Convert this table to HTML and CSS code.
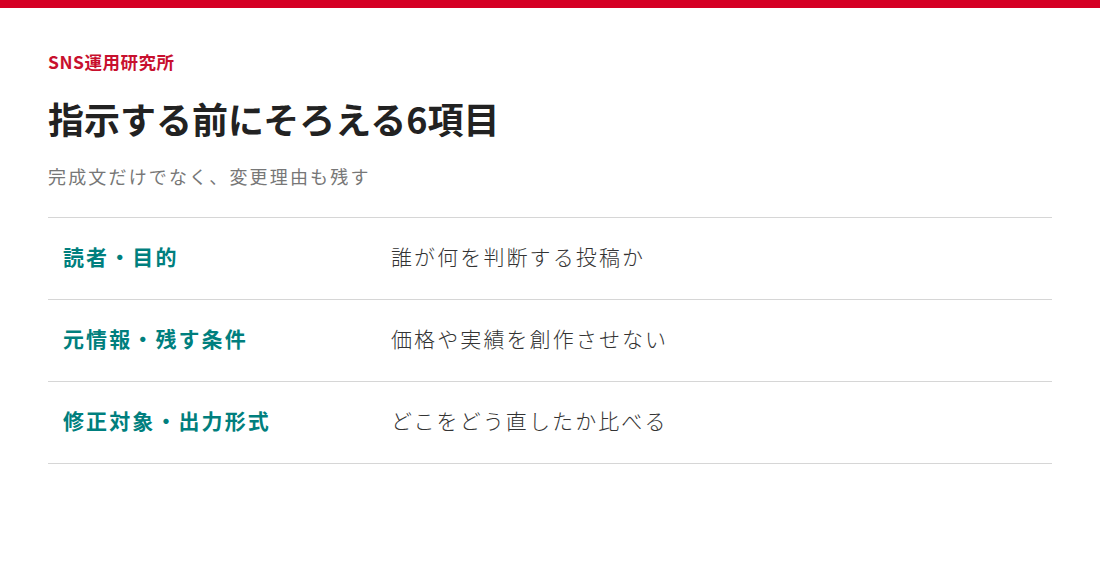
FILE: index.html
```html
<!DOCTYPE html>
<html lang="ja">
<head>
<meta charset="utf-8">
<link rel="stylesheet" href="styles.css">
</head>
<body>
<div class="topbar"></div>
<main class="page">
  <div class="brand">SNS運用研究所</div>
  <h1 class="title">指示する前にそろえる6項目</h1>
  <p class="subtitle">完成文だけでなく、変更理由も残す</p>
  <div class="table">
    <div class="row">
      <div class="label">読者・目的</div>
      <div class="value">誰が何を判断する投稿か</div>
    </div>
    <div class="row">
      <div class="label">元情報・残す条件</div>
      <div class="value">価格や実績を創作させない</div>
    </div>
    <div class="row">
      <div class="label">修正対象・出力形式</div>
      <div class="value">どこをどう直したか比べる</div>
    </div>
  </div>
</main>
</body>
</html>
```
FILE: styles.css
```css
html, body {
  margin: 0;
  padding: 0;
  background: #ffffff;
}
body {
  font-family: "Noto Sans CJK JP", "Noto Sans", sans-serif;
  color: #222222;
}
.topbar {
  height: 8px;
  background: #d50025;
}
.page {
  padding: 42px 48px 0;
}
.brand {
  font-size: 17.5px;
  line-height: 24px;
  font-weight: 700;
  color: #c8102e;
  letter-spacing: 0.03em;
}
.title {
  margin: 20px 0 0;
  font-size: 36px;
  line-height: 48px;
  font-weight: 700;
  color: #222222;
}
.subtitle {
  margin: 20px 0 0;
  font-size: 18px;
  line-height: 28px;
  color: #777777;
  letter-spacing: 0.12em;
}
.table {
  margin-top: 27px;
  border-top: 1px solid #d6d6d6;
}
.row {
  display: grid;
  grid-template-columns: 343px 1fr;
  align-items: center;
  height: 81px;
  box-sizing: border-box;
  padding-bottom: 6px;
  border-bottom: 1px solid #d6d6d6;
}
.row {
  height: 82px;
}
.label {
  padding-left: 15px;
  font-size: 21px;
  font-weight: 700;
  color: #007f7e;
  letter-spacing: 0.1em;
}
.value {
  font-size: 21px;
  font-weight: 300;
  color: #333333;
  letter-spacing: 0.1em;
}
```
